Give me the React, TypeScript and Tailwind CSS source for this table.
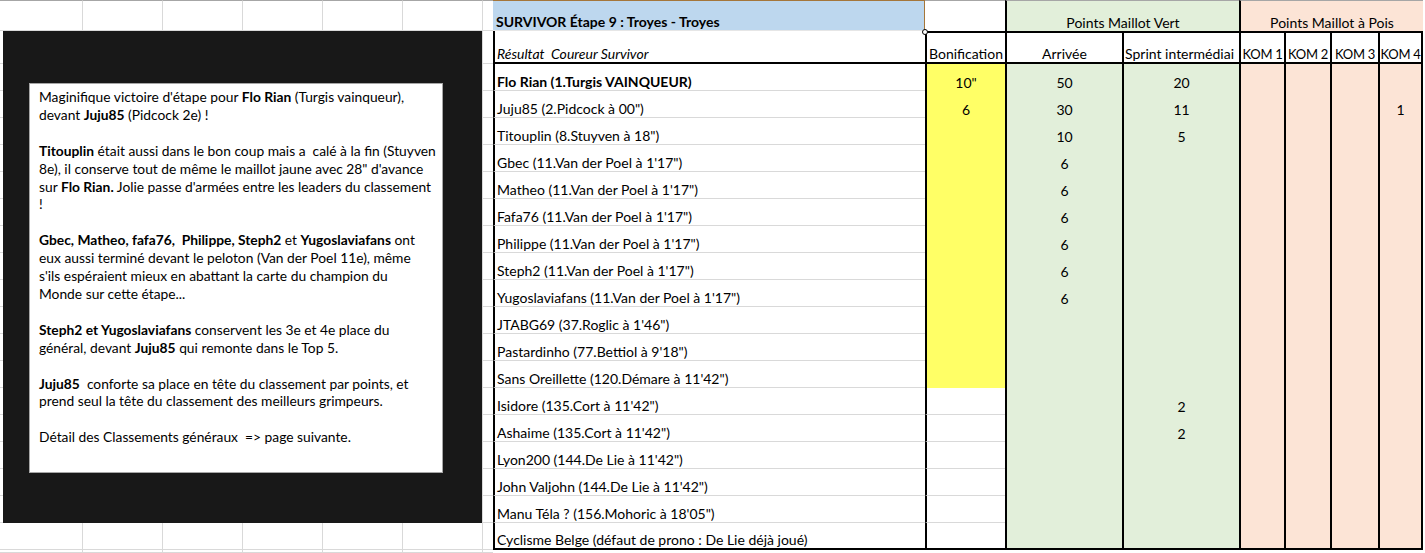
import React from 'react';

interface Ligne {
  nom: string;
  gras?: boolean;
  bonif?: string;
  arrivee?: string;
  sprint?: string;
  kom4?: string;
}

const lignes: Ligne[] = [
  { nom: 'Flo Rian (1.Turgis VAINQUEUR)', gras: true, bonif: '10"', arrivee: '50', sprint: '20' },
  { nom: 'Juju85 (2.Pidcock à 00")', bonif: '6', arrivee: '30', sprint: '11', kom4: '1' },
  { nom: 'Titouplin (8.Stuyven à 18")', arrivee: '10', sprint: '5' },
  { nom: "Gbec (11.Van der Poel à 1'17\")", arrivee: '6' },
  { nom: "Matheo (11.Van der Poel à 1'17\")", arrivee: '6' },
  { nom: "Fafa76 (11.Van der Poel à 1'17\")", arrivee: '6' },
  { nom: "Philippe (11.Van der Poel à 1'17\")", arrivee: '6' },
  { nom: "Steph2 (11.Van der Poel à 1'17\")", arrivee: '6' },
  { nom: "Yugoslaviafans (11.Van der Poel à 1'17\")", arrivee: '6' },
  { nom: "JTABG69 (37.Roglic à 1'46\")" },
  { nom: "Pastardinho (77.Bettiol à 9'18\")" },
  { nom: "Sans Oreillette (120.Démare à 11'42\")" },
  { nom: "Isidore (135.Cort à 11'42\")", sprint: '2' },
  { nom: "Ashaime (135.Cort à 11'42\")", sprint: '2' },
  { nom: "Lyon200 (144.De Lie à 11'42\")" },
  { nom: "John Valjohn (144.De Lie à 11'42\")" },
  { nom: "Manu Téla ? (156.Mohoric à 18'05\")" },
  { nom: 'Cyclisme Belge (défaut de prono : De Lie déjà joué)' },
];

// largeurs des colonnes de la feuille à gauche du tableau
const colsGauche = [83, 80, 80, 80, 80, 80, 10];
const rangsGauche = [31, 33, ...Array(18).fill(27), 3];

const cols = 'grid grid-cols-[432px_80px_117px_117px_45px_46px_48px_45px]';

export default function App() {
  return (
    <div className="relative w-[1425px] h-[553px] overflow-hidden bg-white text-black font-['Lato',sans-serif] text-[14px]">
      <div className="flex">
        {/* Cellules vides de la feuille */}
        <div className="relative w-[493px] shrink-0">
          {rangsGauche.map((h, r) => (
            <div key={r} className="flex" style={{ height: h }}>
              {colsGauche.map((w, c) => (
                <div
                  key={c}
                  style={{ width: w }}
                  className={`border-b border-[#d9d9d9] ${c < 6 ? 'border-r' : ''} ${r === 0 ? 'border-t border-t-[#a6a6a6]' : ''}`}
                />
              ))}
            </div>
          ))}

          {/* Zone de texte sur fond noir */}
          <div className="absolute left-[3px] top-[31px] w-[479px] h-[492px] bg-[#181818] pl-[26px] pt-[52px]">
            <div className="w-[414px] h-[390px] bg-white border border-[#a6a6a6] pl-[9px] pt-[4px] text-[13.8px] leading-[17.9px] whitespace-nowrap">
              <div>Maginifique victoire d'étape pour <b>Flo Rian</b> (Turgis vainqueur),</div>
              <div>devant <b>Juju85</b> (Pidcock 2e) !</div>
              <div>&nbsp;</div>
              <div><b>Titouplin</b> était aussi dans le bon coup mais a&nbsp; calé à la fin (Stuyven</div>
              <div>8e), il conserve tout de même le maillot jaune avec 28" d'avance</div>
              <div>sur <b>Flo Rian.</b> Jolie passe d'armées entre les leaders du classement</div>
              <div>!</div>
              <div>&nbsp;</div>
              <div><b>Gbec, Matheo, fafa76,&nbsp; Philippe, Steph2</b> et <b>Yugoslaviafans</b> ont</div>
              <div>eux aussi terminé devant le peloton (Van der Poel 11e), même</div>
              <div>s'ils espéraient mieux en abattant la carte du champion du</div>
              <div>Monde sur cette étape...</div>
              <div>&nbsp;</div>
              <div><b>Steph2 et Yugoslaviafans</b> conservent les 3e et 4e place du</div>
              <div>général, devant <b>Juju85</b> qui remonte dans le Top 5.</div>
              <div>&nbsp;</div>
              <div><b>Juju85</b>&nbsp; conforte sa place en tête du classement par points, et</div>
              <div>prend seul la tête du classement des meilleurs grimpeurs.</div>
              <div>&nbsp;</div>
              <div>Détail des Classements généraux&nbsp; =&gt; page suivante.</div>
            </div>
          </div>
        </div>

        {/* Tableau Survivor */}
        <div className="relative w-[932px] shrink-0">
          <div className={`${cols} h-[31px] leading-[16px]`}>
            <div className="bg-[#bdd7ee] border-t border-t-[#a5763a] border-r border-r-[#a5763a] border-b border-b-[#e6e6e6] flex items-end pl-[3px] font-bold">
              SURVIVOR Étape 9 : Troyes - Troyes
            </div>
            <div className="border-t border-t-[#a6a6a6]" />
            <div className="col-span-2 bg-[#e2efda] border-t border-t-[#a6a6a6] border-l-2 border-l-black flex items-end justify-center">
              Points Maillot Vert
            </div>
            <div className="col-span-4 bg-[#fce4d6] border-t border-t-[#a6a6a6] border-l-2 border-l-black flex items-end justify-center">
              Points Maillot à Pois
            </div>
          </div>

          <div className={`${cols} h-[33px] leading-[16px] whitespace-nowrap`}>
            <div className="border-l-2 border-b-2 border-black flex items-end pl-[2px] italic">Résultat&nbsp; Coureur Survivor</div>
            <div className="border-l-2 border-t-2 border-b-2 border-black flex items-end pl-[2px]">Bonification</div>
            <div className="border-l-2 border-t-2 border-b-2 border-black flex items-end justify-center">Arrivée</div>
            <div className="border-l-2 border-t-2 border-b-2 border-black flex items-end pl-[1px]">Sprint intermédiai</div>
            <div className="border-l-2 border-t-2 border-b-2 border-black flex items-end justify-center text-[13px] tracking-[-0.3px]">KOM 1</div>
            <div className="border-l-2 border-t-2 border-b-2 border-black flex items-end justify-center text-[13px] tracking-[-0.3px]">KOM 2</div>
            <div className="border-l-2 border-t-2 border-b-2 border-black flex items-end justify-center text-[13px] tracking-[-0.3px]">KOM 3</div>
            <div className="border-l-2 border-r-2 border-t-2 border-b-2 border-black flex items-end justify-center text-[13px] tracking-[-0.3px]">KOM 4</div>
          </div>

          {lignes.map((l, i) => {
            const dernier = i === lignes.length - 1;
            const bas = dernier ? 'border-b-2 border-b-black' : '';
            const jaune = i < 12;
            return (
              <div key={l.nom} className={`${cols} h-[27px] leading-[16px] whitespace-nowrap`}>
                <div className={`border-l-2 border-l-black flex items-end pl-[2px] ${dernier ? bas : 'border-b border-b-[#d9d9d9]'} ${l.gras ? 'font-bold' : ''}`}>
                  {l.nom}
                </div>
                <div className={`border-l-2 border-l-black flex items-end justify-center ${jaune ? 'bg-[#ffff66]' : ''} ${dernier ? bas : jaune ? '' : 'border-b border-b-[#d9d9d9]'}`}>
                  {l.bonif}
                </div>
                <div className={`border-l-2 border-l-black bg-[#e2efda] flex items-end justify-center ${bas}`}>{l.arrivee}</div>
                <div className={`border-l-2 border-l-black bg-[#e2efda] flex items-end justify-center ${bas}`}>{l.sprint}</div>
                <div className={`border-l-2 border-l-black bg-[#fce4d6] ${bas}`} />
                <div className={`border-l-2 border-l-black bg-[#fce4d6] ${bas}`} />
                <div className={`border-l-2 border-l-black bg-[#fce4d6] ${bas}`} />
                <div className={`border-l-2 border-l-black border-r-2 border-r-black bg-[#fce4d6] flex items-end justify-center ${bas}`}>{l.kom4}</div>
              </div>
            );
          })}

          {/* poignée de recopie de la cellule sélectionnée */}
          <div className="absolute left-[429px] top-[29px] w-[6px] h-[6px] rounded-full bg-white border border-black" />
        </div>
      </div>
    </div>
  );
}
